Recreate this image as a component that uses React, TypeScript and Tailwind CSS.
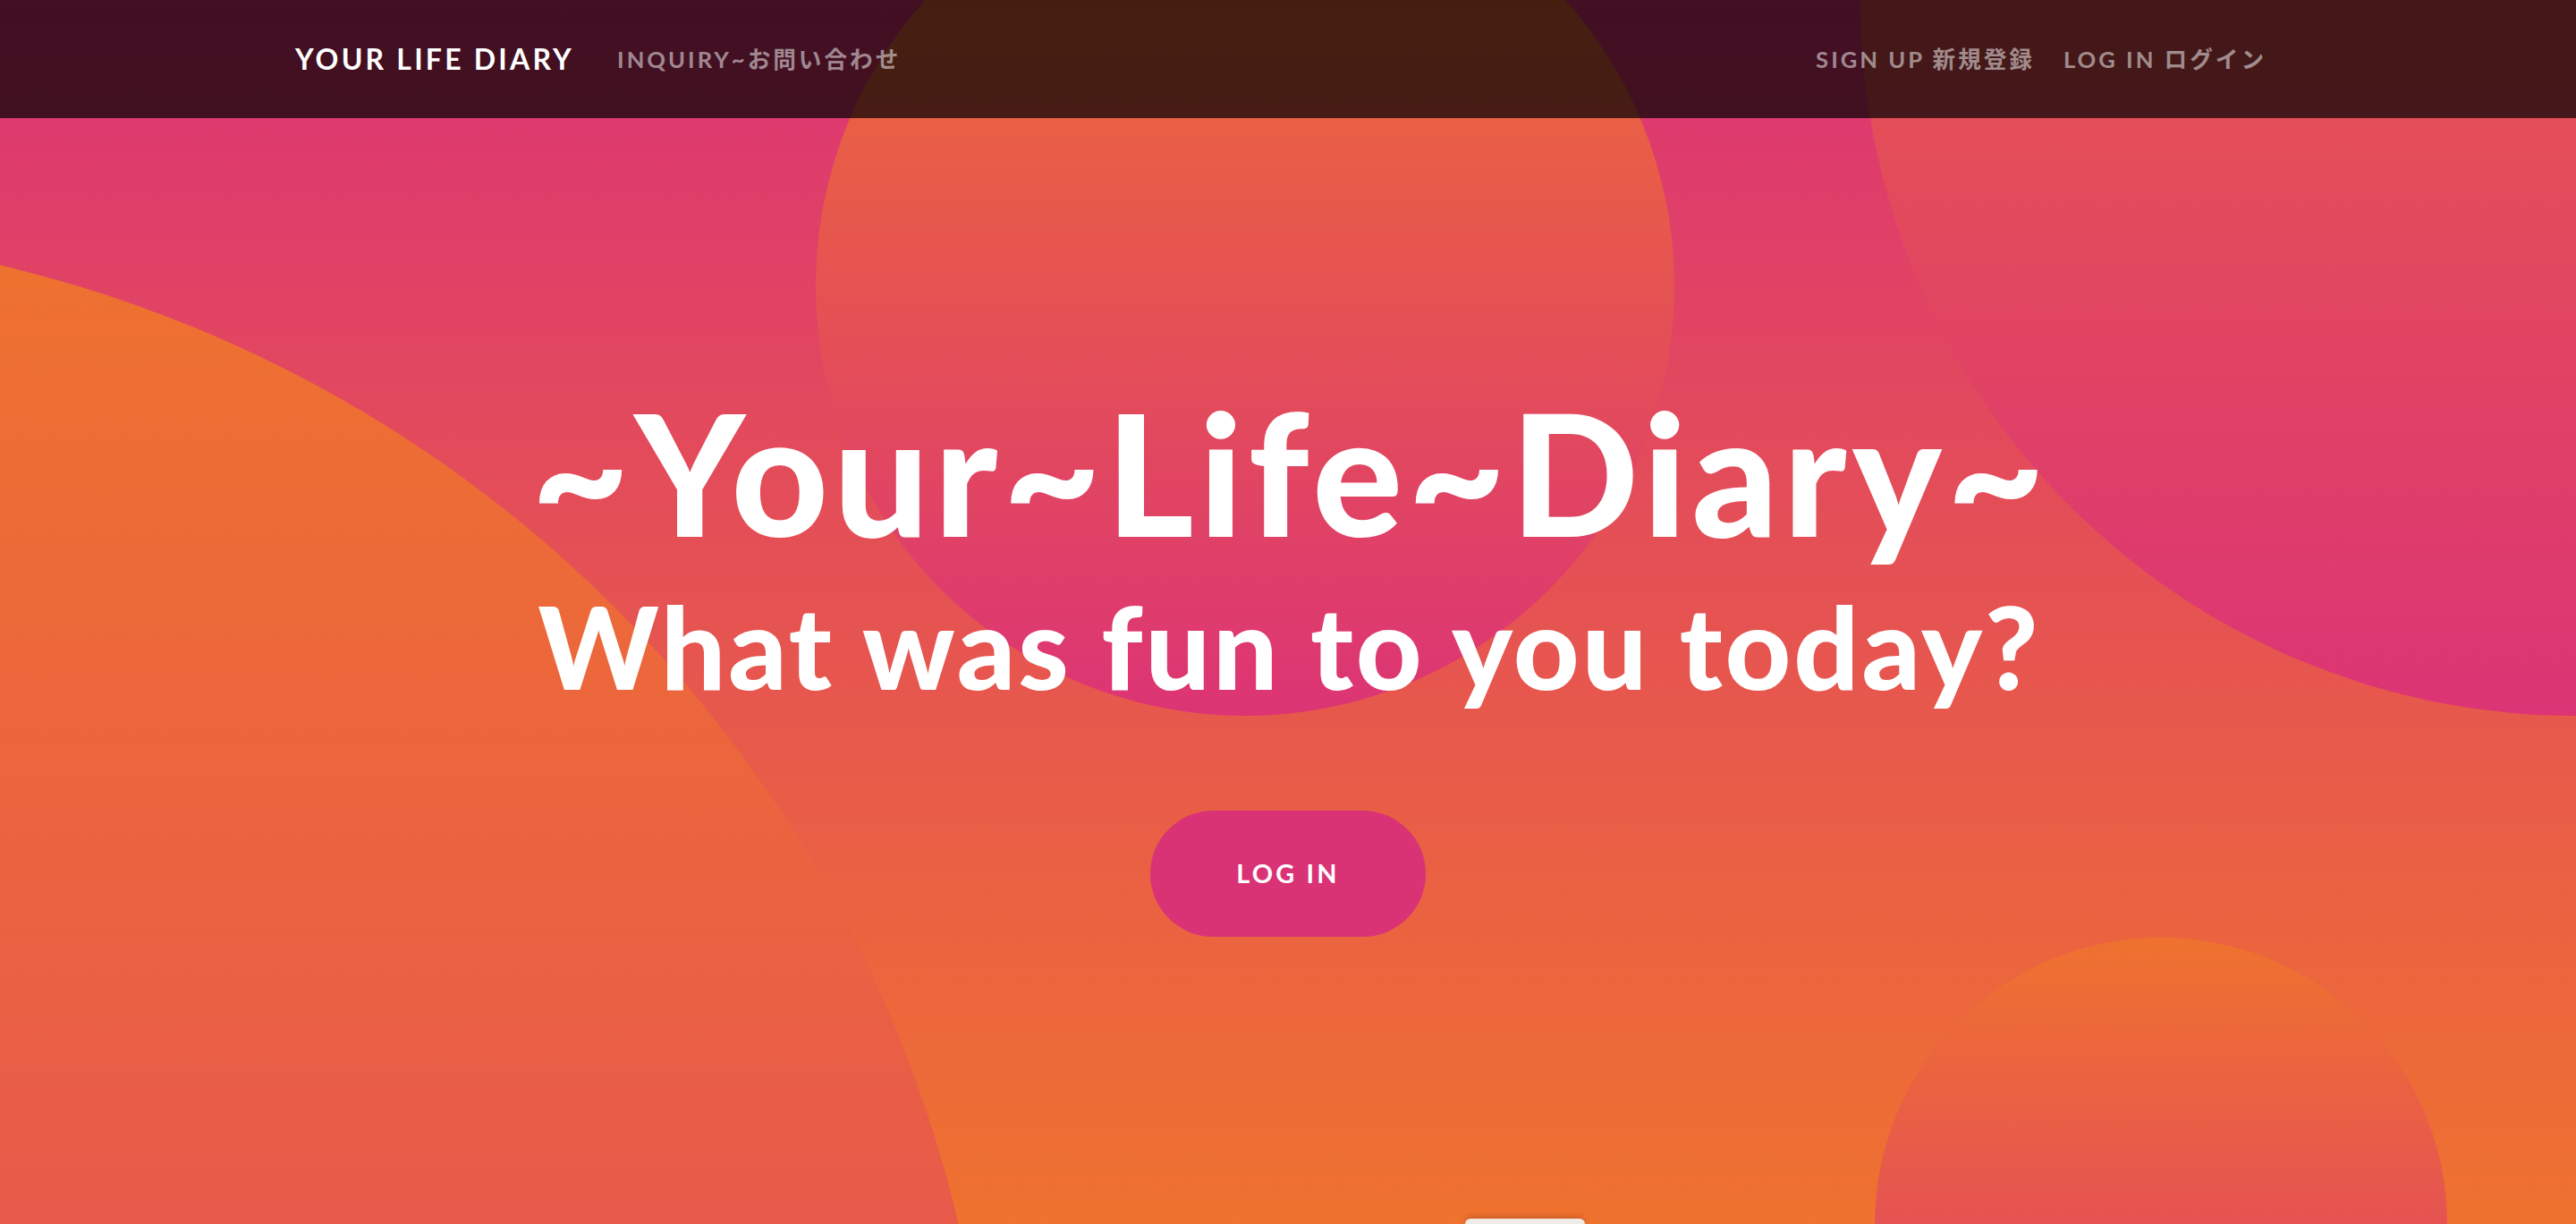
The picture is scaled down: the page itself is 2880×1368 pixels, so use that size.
import { FC } from 'react'

// one gradient for every circle: orange at the top, pink at the bottom
const circles = [
    { cx: -330, cy: 1698, r: 1440 },
    { cx: 2880, cy: 0, r: 800 },
    { cx: 1392, cy: 320, r: 480 },
    { cx: 2416, cy: 1368, r: 320 },
];

const Backdrop: FC = () => (
    <svg
        className="absolute inset-0 h-full w-full"
        viewBox="0 0 2880 1368"
        preserveAspectRatio="none"
        aria-hidden="true"
    >
        <defs>
            <linearGradient id="circle-fill" x1="0" y1="0" x2="0" y2="1">
                <stop offset="0" stopColor="#ef722f" />
                <stop offset="1" stopColor="#dc3475" />
            </linearGradient>
        </defs>
        {circles.map((c, i) => (
            <circle key={i} cx={c.cx} cy={c.cy} r={c.r} fill="url(#circle-fill)" />
        ))}
    </svg>
);

const navLink = 'px-4 text-[25.6px] font-bold uppercase tracking-[3px] text-white/50 hover:text-white/75 transition-colors';

const App: FC = () => {
    return (
        <div className="relative h-[1368px] w-full overflow-hidden bg-[linear-gradient(180deg,#dc3475,#ef722f)] font-['Lato','Noto_Sans_CJK_JP',sans-serif]">
            <Backdrop />

            <nav className="relative z-10 h-[132px] bg-black/70">
                <div className="mx-auto flex h-full w-[2280px] items-center px-[30px]">
                    <a href="#" className="mr-8 text-[32px] font-bold uppercase tracking-[3.2px] text-white">
                        Your Life Diary
                    </a>
                    <a href="#" className={navLink}>
                        INQUIRY~お問い合わせ
                    </a>
                    <div className="ml-auto flex">
                        <a href="#" className={navLink}>SIGN UP 新規登録</a>
                        <a href="#" className={navLink}>LOG IN ログイン</a>
                    </div>
                </div>
            </nav>

            <main className="relative z-10 flex flex-col items-center pt-[301px] text-center text-white">
                <h1 className="pl-[6px] text-[188px] font-black leading-none tracking-[6px]">~Your~Life~Diary~</h1>
                <h2 className="mt-[37px] pl-[3px] text-[128px] font-black leading-none tracking-[3px]">
                    What was fun to you today?
                </h2>
                <a
                    href="#"
                    className="mt-[120px] flex h-[141px] w-[308px] items-center justify-center rounded-full bg-[#d93376] text-[28.8px] font-bold uppercase tracking-[3.2px] text-white"
                >
                    Log In
                </a>
            </main>

            <div className="absolute bottom-0 left-[1638px] h-[6px] w-[134px] rounded-t-lg bg-[#efebe6] shadow-[0_-2px_6px_rgba(120,50,20,0.35)]" />
        </div>
    );
};

export default App;
